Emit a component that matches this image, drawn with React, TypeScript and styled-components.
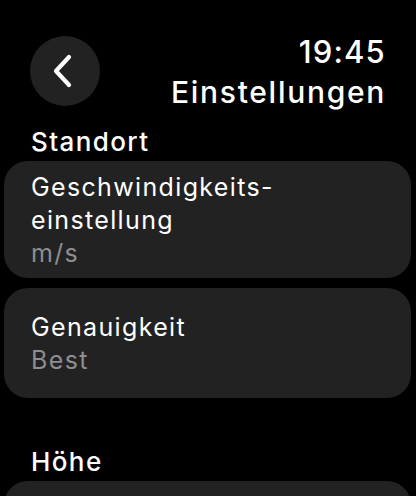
import React from "react";
import styled, { createGlobalStyle } from "styled-components";

const Global = createGlobalStyle`
  html, body { margin: 0; padding: 0; background: #000; }
  body { font-family: Inter, "Noto Sans", sans-serif; color: #fff; -webkit-font-smoothing: antialiased; }
`;

const Screen = styled.div`
  width: 416px;
  height: 496px;
  overflow: hidden;
  background: #000;
  display: flex;
  flex-direction: column;
`;

const Header = styled.header`
  display: flex;
  justify-content: space-between;
  align-items: flex-start;
  padding: 36px 30px 0 30px;
`;

const BackButton = styled.button`
  width: 70px;
  height: 70px;
  border-radius: 50%;
  border: none;
  background: #222222;
  display: flex;
  align-items: center;
  justify-content: center;
  padding: 0 4px 0 0;
  cursor: pointer;
`;

const TitleBlock = styled.div`
  display: flex;
  flex-direction: column;
  align-items: flex-end;
  margin-top: -3px;
`;

const Time = styled.div`
  font-size: 31px;
  font-weight: 500;
  line-height: 38px;
  letter-spacing: 1.2px;
`;

const Title = styled.h1`
  margin: 2px 0 0;
  font-size: 30px;
  font-weight: 500;
  line-height: 38px;
  letter-spacing: 1.7px;
`;

const SectionLabel = styled.div<{ $top: number }>`
  font-size: 26px;
  font-weight: 500;
  line-height: 32px;
  letter-spacing: 1.4px;
  padding: ${(p) => p.$top}px 31px 3px;
`;

const List = styled.div`
  display: flex;
  flex-direction: column;
  gap: 10px;
  padding: 0 5px 0 4px;
`;

const Card = styled.div<{ $top: number; $bottom: number }>`
  background: #222222;
  border-radius: 24px;
  padding: ${(p) => p.$top}px 27px ${(p) => p.$bottom}px;
  min-height: 60px;
  display: flex;
  flex-direction: column;
`;

const Primary = styled.div`
  font-size: 25px;
  line-height: 33px;
  letter-spacing: 1.35px;
  color: #fff;
`;

const Secondary = styled.div`
  font-size: 25px;
  line-height: 33px;
  letter-spacing: 1.35px;
  color: #8d8d92;
`;

export default function App() {
  return (
    <>
      <Global />
      <Screen>
        <Header>
          <BackButton aria-label="Zurück">
            <svg width="22" height="34" viewBox="0 0 22 34">
              <path d="M17 3 L4 17 L17 31" stroke="#fff" strokeWidth="4.2" fill="none" strokeLinecap="round" strokeLinejoin="round" />
            </svg>
          </BackButton>
          <TitleBlock>
            <Time>19:45</Time>
            <Title>Einstellungen</Title>
          </TitleBlock>
        </Header>
        <SectionLabel $top={15}>Standort</SectionLabel>
        <List>
          <Card $top={10} $bottom={8}>
            <Primary>Geschwindigkeits-</Primary>
            <Primary>einstellung</Primary>
            <Secondary>m/s</Secondary>
          </Card>
          <Card $top={23} $bottom={21}>
            <Primary>Genauigkeit</Primary>
            <Secondary>Best</Secondary>
          </Card>
        </List>
        <SectionLabel $top={48}>Höhe</SectionLabel>
        <List>
          <Card $top={23} $bottom={21} />
        </List>
      </Screen>
    </>
  );
}
